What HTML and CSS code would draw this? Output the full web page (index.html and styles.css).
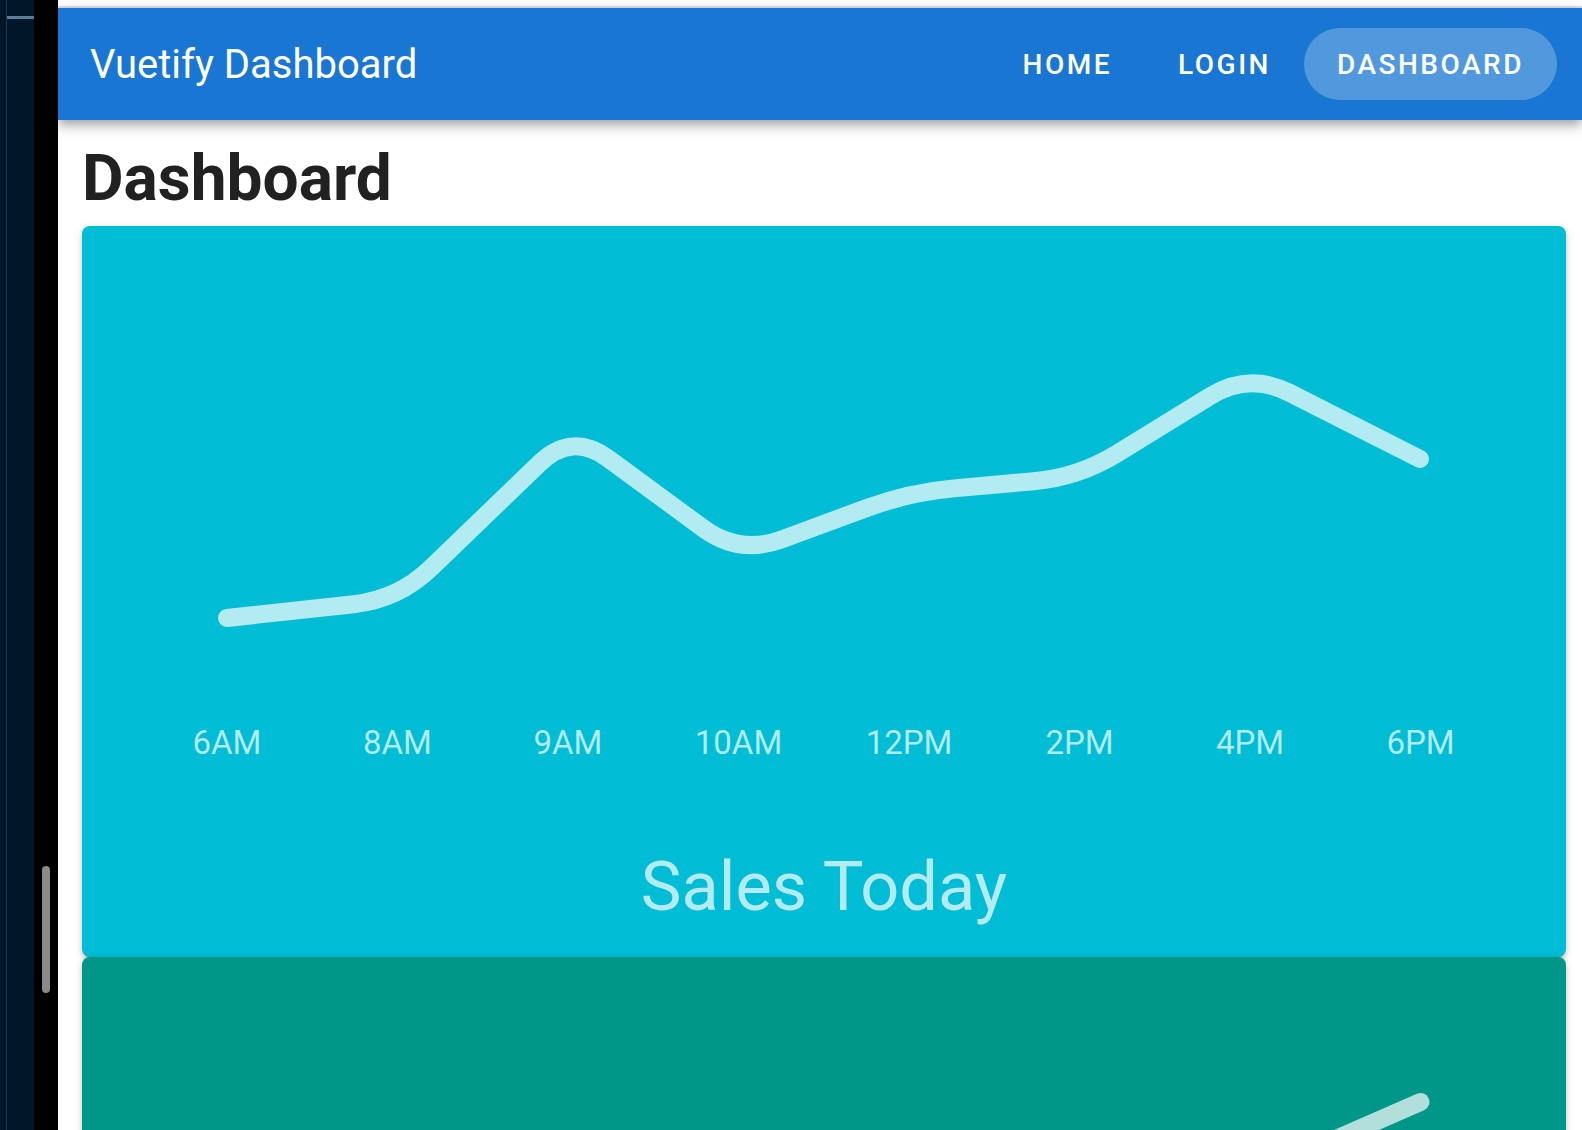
FILE: index.html
```html
<!DOCTYPE html>
<html lang="en">
<head>
<meta charset="utf-8">
<title>Vuetify Dashboard</title>
<link rel="stylesheet" href="styles.css">
</head>
<body>
<div class="app">
  <div class="sidebar">
    <div class="side-gap"></div>
    <div class="side-line"></div>
    <div class="side-col"><div class="side-bar"></div></div>
  </div>
  <div class="gutter"><div class="thumb"></div></div>
  <div class="main">
    <div class="top-strip"></div>
    <header class="appbar">
      <div class="brand">Vuetify Dashboard</div>
      <div class="spacer"></div>
      <nav class="nav">
        <a class="btn">HOME</a>
        <a class="btn">LOGIN</a>
        <a class="btn active">DASHBOARD</a>
      </nav>
    </header>
    <section class="content">
      <h1 class="page-title">Dashboard</h1>
      <div class="card card-cyan">
        <svg class="spark" viewBox="0 0 1484 621" width="1484" height="621">
          <path class="line-cyan" d="M145 392 L271.76 378.18 Q316.5 373.3 348.9 342.06 L457.6 237.24 Q490 206 526.28 232.62 L621.32 302.38 Q657.6 329 699.81 313.4 L784.79 282 Q827 266.4 871.82 262.38 L951.78 255.22 Q996.6 251.2 1034.92 227.61 L1128.68 169.89 Q1167 146.3 1207.14 166.65 L1338 233"/>
          <g class="labels">
            <text x="145" y="528">6AM</text>
            <text x="315.5" y="528">8AM</text>
            <text x="486" y="528">9AM</text>
            <text x="656.5" y="528">10AM</text>
            <text x="827" y="528">12PM</text>
            <text x="997.5" y="528">2PM</text>
            <text x="1168" y="528">4PM</text>
            <text x="1338.5" y="528">6PM</text>
          </g>
        </svg>
        <div class="card-title">Sales Today</div>
      </div>
      <div class="card card-teal">
        <svg class="spark" viewBox="0 0 1484 621" width="1484" height="621">
          <path class="line-teal" d="M1000 290 L1167 220 L1338.5 145"/>
        </svg>
      </div>
    </section>
  </div>
</div>
</body>
</html>
```

FILE: styles.css
```css
html, body {
  margin: 0;
  padding: 0;
  height: 100%;
  overflow: hidden;
  background: #ffffff;
  font-family: Roboto, "Liberation Sans", sans-serif;
}

.app {
  display: flex;
  height: 100vh;
}

.sidebar {
  width: 34px;
  flex: none;
  display: flex;
  background: #011628;
}

.side-gap {
  width: 6px;
}

.side-line {
  width: 1px;
  background: #1f364b;
}

.side-col {
  flex: 1;
  padding-top: 16px;
}

.side-bar {
  height: 3px;
  background: #5c7d98;
}

.gutter {
  width: 24px;
  flex: none;
  background: #000000;
  padding: 866px 0 0 8px;
  box-sizing: border-box;
}

.thumb {
  width: 8px;
  height: 127px;
  border-radius: 4px;
  background: #8a8a8a;
}

.main {
  flex: 1;
  display: flex;
  flex-direction: column;
  min-width: 0;
  background: #ffffff;
}

.top-strip {
  height: 6px;
  border-bottom: 2px solid #dcdcdc;
  flex: none;
}

.appbar {
  height: 112px;
  flex: none;
  display: flex;
  align-items: center;
  padding: 0 25px 0 32px;
  background: #1976d2;
  color: #ffffff;
  box-shadow: 0 4px 8px -2px rgba(0,0,0,.2), 0 8px 10px 0 rgba(0,0,0,.14), 0 2px 20px 0 rgba(0,0,0,.12);
  position: relative;
  z-index: 2;
}

.brand {
  font-size: 40px;
  font-weight: 400;
}

.spacer {
  flex: 1;
}

.nav {
  display: flex;
  align-items: center;
}

.btn {
  height: 72px;
  padding: 0 33px;
  display: flex;
  align-items: center;
  border-radius: 36px;
  font-size: 28px;
  font-weight: 500;
  letter-spacing: 2.5px;
  color: #ffffff;
}

.btn.active {
  background: rgba(255,255,255,0.25);
}

.content {
  padding: 0 16px 0 24px;
}

.page-title {
  margin: 21px 0 9px 0;
  font-size: 64px;
  line-height: 76px;
  font-weight: 700;
  color: #212121;
}

.card {
  height: 731px;
  border-radius: 8px;
  box-shadow: 0 6px 2px -4px rgba(0,0,0,.2), 0 4px 4px 0 rgba(0,0,0,.14), 0 2px 10px 0 rgba(0,0,0,.12);
  overflow: hidden;
}

.card-cyan {
  background: #00bcd4;
}

.card-teal {
  background: #009688;
}

.spark {
  display: block;
}

.line-cyan {
  fill: none;
  stroke: #b2ebf2;
  stroke-width: 18;
  stroke-linecap: round;
  stroke-linejoin: round;
}

.line-teal {
  fill: none;
  stroke: #b2dfdb;
  stroke-width: 18;
  stroke-linecap: round;
  stroke-linejoin: round;
}

.labels text {
  font-family: Roboto, "Liberation Sans", sans-serif;
  font-size: 33px;
  fill: #b2ebf2;
  text-anchor: middle;
}

.card-title {
  text-align: center;
  font-size: 68.5px;
  line-height: 80px;
  color: #b2ebf2;
}
```
